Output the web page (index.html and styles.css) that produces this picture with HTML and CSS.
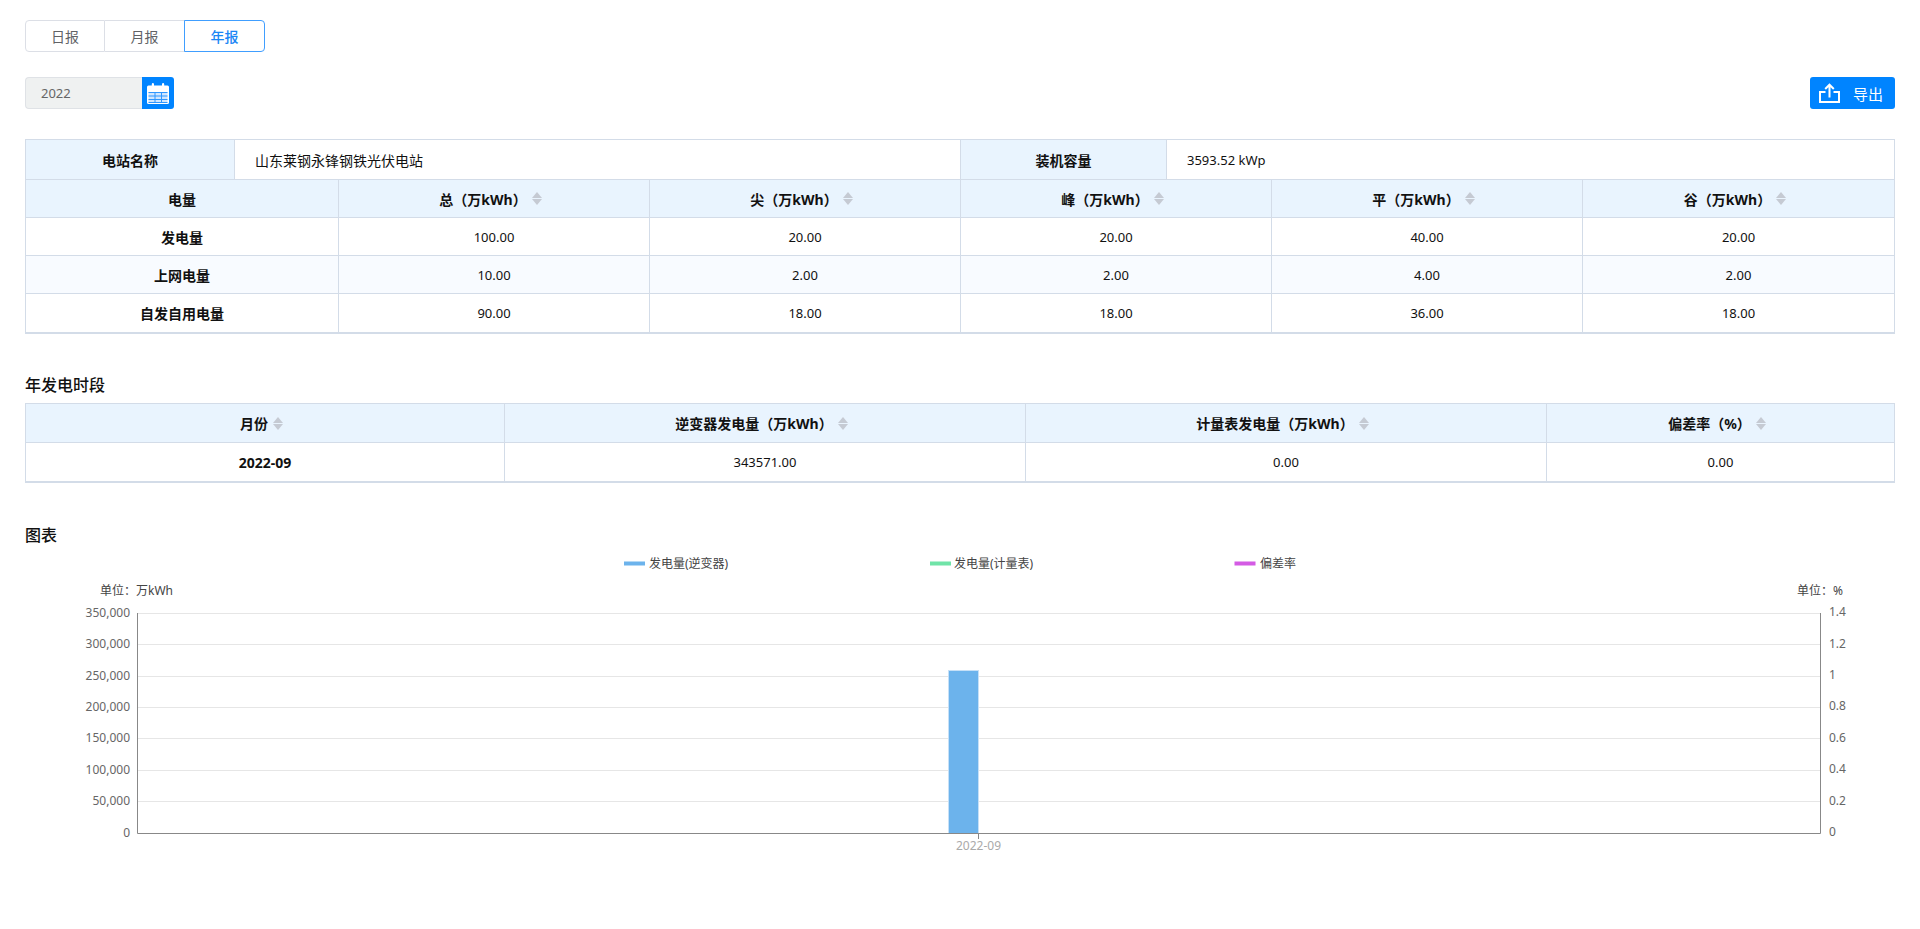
FILE: index.html
```html
<!DOCTYPE html>
<html lang="zh">
<head>
<meta charset="utf-8">
<title>年报</title>
<link rel="stylesheet" href="styles.css">
</head>
<body>
<main class="page">
  <nav class="tabs">
    <a class="tab">日报</a>
    <a class="tab">月报</a>
    <a class="tab tab-active">年报</a>
  </nav>

  <div class="toolbar">
    <div class="date-picker">
      <span class="date-value">2022</span>
      <span class="date-button">
        <svg width="22" height="22" viewBox="0 0 22 22"><path fill="#fff" d="M1.500 3.500h3.300V2.200a1.100 1.100 0 0 1 2.200 0v1.300h8V2.200a1.100 1.100 0 0 1 2.200 0v1.300h3.300A1.500 1.500 0 0 1 22 5v15.500a1.500 1.500 0 0 1-1.500 1.500h-19A1.500 1.500 0 0 1 0 20.500V5a1.500 1.500 0 0 1 1.500-1.500z"/><path fill="#cfe6ff" d="M1.500 10h19v10.500h-19z"/><path stroke="#2f97ff" stroke-width="1" fill="none" d="M1.500 10.500h19M1.500 14h19M1.500 17.500h19M1.500 20.500h19M8 10v10.500M14.500 10v10.500"/></svg>
      </span>
    </div>
    <button class="export">
      <svg width="21" height="20" viewBox="0 0 21 20" fill="none" stroke="#fff" stroke-width="2"><path d="M6.500 9H1v10h19V9h-5.500"/><path d="M10.500 14.500V2M6.200 6l4.300-4.300L14.800 6"/></svg>
      <span>导出</span>
    </button>
  </div>

  <section class="table-box">
    <table class="grid info">
      <colgroup><col class="c-info1"><col class="c-info2"><col class="c-info3"><col></colgroup>
      <tr>
        <th>电站名称</th><td class="left">山东莱钢永锋钢铁光伏电站</td>
        <th>装机容量</th><td class="left num">3593.52 kWp</td>
      </tr>
    </table>
    <table class="grid data">
      <colgroup><col class="c-first"><col class="c-data"><col class="c-data"><col class="c-data"><col class="c-data"><col></colgroup>
      <tr>
        <th>电量</th>
        <th><span class="head">总（万kWh）<i class="sort"></i></span></th>
        <th><span class="head">尖（万kWh）<i class="sort"></i></span></th>
        <th><span class="head">峰（万kWh）<i class="sort"></i></span></th>
        <th><span class="head">平（万kWh）<i class="sort"></i></span></th>
        <th><span class="head">谷（万kWh）<i class="sort"></i></span></th>
      </tr>
      <tr><td class="strong">发电量</td><td class="num">100.00</td><td class="num">20.00</td><td class="num">20.00</td><td class="num">40.00</td><td class="num">20.00</td></tr>
      <tr class="zebra"><td class="strong">上网电量</td><td class="num">10.00</td><td class="num">2.00</td><td class="num">2.00</td><td class="num">4.00</td><td class="num">2.00</td></tr>
      <tr><td class="strong">自发自用电量</td><td class="num">90.00</td><td class="num">18.00</td><td class="num">18.00</td><td class="num">36.00</td><td class="num">18.00</td></tr>
    </table>
  </section>

  <h2 class="title title-period">年发电时段</h2>
  <section class="table-box">
    <table class="grid data tall">
      <colgroup><col class="c-m1"><col class="c-m2"><col class="c-m3"><col></colgroup>
      <tr>
        <th><span class="head">月份<i class="sort"></i></span></th>
        <th><span class="head">逆变器发电量（万kWh）<i class="sort"></i></span></th>
        <th><span class="head">计量表发电量（万kWh）<i class="sort"></i></span></th>
        <th><span class="head">偏差率（%）<i class="sort"></i></span></th>
      </tr>
      <tr><td class="strong">2022-09</td><td class="num">343571.00</td><td class="num">0.00</td><td class="num">0.00</td></tr>
    </table>
  </section>

  <h2 class="title title-chart">图表</h2>
  <svg class="chart" width="1870" height="320" viewBox="0 0 1870 320">
    <g class="legend">
      <rect x="599" y="11.500" width="21" height="4" fill="#6cb3ec"/>
      <text x="624" y="17.500">发电量(逆变器)</text>
      <rect x="905" y="11.500" width="21" height="4" fill="#70e4a8"/>
      <text x="929" y="17.500">发电量(计量表)</text>
      <rect x="1209.500" y="11.500" width="21" height="4" fill="#d45be4"/>
      <text x="1235" y="17.500">偏差率</text>
    </g>
    <text class="unit" x="75" y="45">单位：万kWh</text>
    <text class="unit" x="1772" y="45">单位：%</text>
    <g class="grid-lines">
      <path d="M113 63.500H1795M113 94.500H1795M113 126.500H1795M113 157.500H1795M113 188.500H1795M113 220.500H1795M113 251.500H1795"/>
    </g>
    <rect class="bar" x="923.500" y="120.500" width="30" height="163"/>
    <g class="axes">
      <path d="M112.500 63V283.500H1795.500V63M953.500 283.500V289"/>
    </g>
    <g class="y-left">
      <text x="105" y="67">350,000</text>
      <text x="105" y="98">300,000</text>
      <text x="105" y="130">250,000</text>
      <text x="105" y="161">200,000</text>
      <text x="105" y="192">150,000</text>
      <text x="105" y="224">100,000</text>
      <text x="105" y="255">50,000</text>
      <text x="105" y="287">0</text>
    </g>
    <g class="y-right">
      <text x="1804" y="66">1.4</text>
      <text x="1804" y="98">1.2</text>
      <text x="1804" y="129">1</text>
      <text x="1804" y="160">0.8</text>
      <text x="1804" y="192">0.6</text>
      <text x="1804" y="223">0.4</text>
      <text x="1804" y="255">0.2</text>
      <text x="1804" y="286">0</text>
    </g>
    <text class="x-label" x="953.500" y="300">2022-09</text>
  </svg>
</main>
</body>
</html>
```
FILE: styles.css
```css
* { box-sizing: border-box; }
html, body { margin: 0; height: 100%; overflow: hidden; background: #fff; }
body {
  font-family: "Noto Sans", "Noto Sans CJK SC", sans-serif;
  font-size: 14px;
  color: #111;
}
.page { padding: 20px 25px 0; }

.tabs { display: flex; height: 32px; width: 240px; }
.tab {
  display: flex; align-items: center; justify-content: center;
  width: 80px; border: 1px solid #dcdfe6; border-left: 0; color: #606266;
}
.tab:first-child { border-left: 1px solid #dcdfe6; border-radius: 4px 0 0 4px; width: 80px; }
.tab-active {
  width: 81px; margin-left: -1px; border: 1px solid #409eff; border-radius: 0 4px 4px 0;
  color: #1a86f5; font-weight: 500;
}

.toolbar { display: flex; justify-content: space-between; margin-top: 25px; height: 32px; }
.date-picker { display: flex; width: 149px; }
.date-value {
  flex: 1; display: flex; align-items: center; padding-left: 15px; font-size: 13px;
  background: #eff1f1; border: 1px solid #dfe2e6; border-right: 0; border-radius: 4px 0 0 4px; color: #666;
}
.date-button {
  width: 32px; display: flex; align-items: center; justify-content: center;
  background: #0084ff; border-radius: 0 3px 3px 0;
}
.export {
  width: 85px; display: flex; align-items: center; gap: 13px;
  padding: 0 0 0 9px; border: 0; border-radius: 3px; background: #0084ff; color: #fff;
  font-family: inherit; font-size: 15px;
}

.table-box { border: 1px solid #d3dce8; border-bottom-width: 2px; }
.table-box:first-of-type { margin-top: 30px; }
.grid { width: 100%; border-collapse: separate; border-spacing: 0; table-layout: fixed; }
.grid th, .grid td {
  height: 38px; padding: 0; text-align: center; vertical-align: middle;
  border-right: 1px solid #d3dce8; border-bottom: 1px solid #d3dce8;
}
.grid th:last-child, .grid td:last-child { border-right: 0; }
.grid tr:last-child > td { border-bottom: 0; }
.grid th { background: #e9f4fe; font-weight: 700; color: #111; }
.info th, .info td { height: 40px; border-bottom: 1px solid #d3dce8 !important; }
.tall th { height: 39px; }
.grid td.left { text-align: left; padding-left: 20px; }
.grid td.strong { font-weight: 700; }
.grid .num { font-size: 13px; }
.zebra td { background: #f8fbff; }
.head { display: inline-flex; align-items: center; gap: 5px; }
.sort {
  display: inline-block; width: 11px; height: 13px; margin-right: 6px; position: relative;
}
.sort::before, .sort::after {
  content: ""; position: absolute; left: 0;
  border-left: 5.5px solid transparent; border-right: 5.5px solid transparent;
}
.sort::before { top: 0; border-bottom: 6px solid #c5cad3; }
.sort::after { bottom: 0; border-top: 6px solid #c5cad3; }

.c-info1 { width: 209px; }
.c-info2 { width: 726px; }
.c-info3 { width: 206px; }
.c-first { width: 313px; }
.c-data { width: 311px; }
.c-m1 { width: 479px; }
.c-m2 { width: 521px; }
.c-m3 { width: 521px; }

.title { margin: 0; font-size: 16px; line-height: 24px; font-weight: 500; color: #111; }
.title-period { margin-top: 39px; margin-bottom: 6px; }
.title-chart { margin-top: 40px; }

.chart { display: block; margin-top: 3px; }
.chart text { font-family: "Noto Sans", "Noto Sans CJK SC", sans-serif; font-size: 12px; fill: #666; }
.legend text { fill: #444; }
.chart .unit { fill: #444; }
.grid-lines path { stroke: #e6e6e6; stroke-width: 1; fill: none; }
.axes path { stroke: #888; stroke-width: 1; fill: none; }
.bar { fill: #6cb3ec; stroke: #c6e0f7; stroke-width: 1; }
.y-left text { text-anchor: end; }
.chart .x-label { text-anchor: middle; fill: #aaa; }
```
